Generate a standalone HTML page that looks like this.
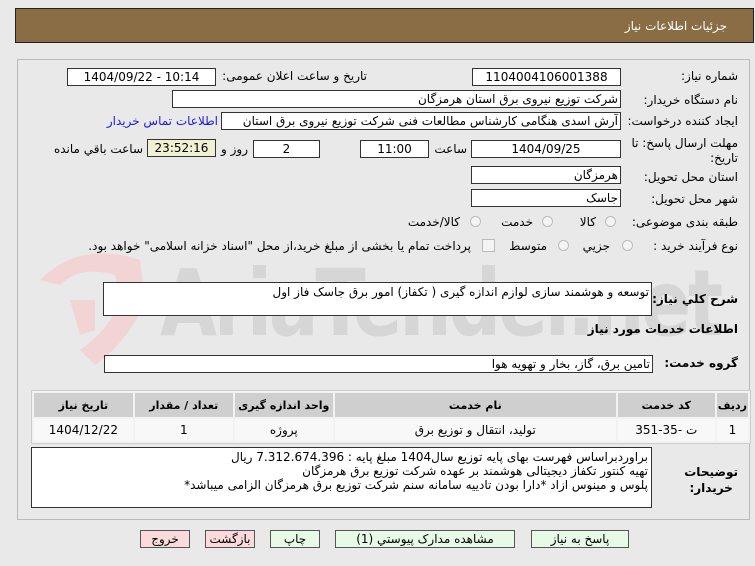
<!DOCTYPE html>
<html><head><meta charset="utf-8"><style>
body{margin:0;width:755px;height:566px;background:#e9e9e9;font-family:"DejaVu Sans","Liberation Sans",sans-serif;font-size:12px;color:#000;position:relative;overflow:hidden}
.a{position:absolute;white-space:nowrap}
.box{position:absolute;background:#fff;border:1px solid #333;box-sizing:border-box;height:18px;line-height:16px;text-align:center;overflow:hidden}
.r{text-align:right;padding-right:2px}
.lbl{position:absolute;white-space:nowrap;direction:rtl}
.rad{position:absolute;width:11px;height:11px;border-radius:50%;border:1px solid #bbb;background:#f4f4f4;box-sizing:border-box}
.btn{position:absolute;top:530px;height:18px;border:1px solid #555;box-sizing:border-box;text-align:center;line-height:16px;font-size:12px;background:#e6fae6}
table{position:absolute;left:31px;top:390px;width:720px;border-collapse:separate;border-spacing:2px;background:#f2f2f2;border:1px solid #ccc;direction:rtl}
th{background:#cfcfcf;height:22px;font-weight:bold;font-size:11px}
td{background:#f8f8f8;height:20px;text-align:center}
</style></head><body>
<div class="a" style="left:15px;top:8px;width:739px;height:35px;background:#8b6d45;border:1px solid #222;box-sizing:border-box"></div>
<div class="lbl" style="right:28px;top:19px;color:#fff;font-size:12px">جزئیات اطلاعات نیاز</div>
<div class="a" style="left:17px;top:59px;width:733px;height:461px;border:1px solid #bbb;box-sizing:border-box"></div>
<svg class="a" style="left:20px;top:240px" width="140" height="135" viewBox="0 0 140 135"><path d="M20 40 Q60 0 120 20 L125 60 Q110 100 75 125 L60 110 Q95 85 100 55 L95 35 Q60 25 40 45 Z" fill="#f2d4d4"/><path d="M50 60 L75 60 L75 90 L60 95 Z" fill="#f2d4d4"/></svg>
<div class="a" style="left:160px;top:250px;font-size:92px;font-weight:bold;color:#d6d6d6;letter-spacing:-4px;transform:scaleX(0.8);transform-origin:left top">AriaTender.net</div>

<div class="lbl" style="right:17px;top:69px">شماره نیاز:</div>
<div class="box" style="left:472px;top:68px;width:149px">1104004106001388</div>
<div class="lbl" style="right:388px;top:69px">تاریخ و ساعت اعلان عمومی:</div>
<div class="box" style="left:67px;top:68px;width:149px">1404/09/22 - 10:14</div>

<div class="lbl" style="right:17px;top:93px">نام دستگاه خریدار:</div>
<div class="box r" style="left:172px;top:90px;width:449px;direction:rtl">شرکت توزیع نیروی برق استان هرمزگان</div>

<div class="lbl" style="right:17px;top:114px">ایجاد کننده درخواست:</div>
<div class="box r" style="left:221px;top:112px;width:400px;direction:rtl">آرش اسدی هنگامی کارشناس مطالعات فنی شرکت توزیع نیروی برق استان هرمزگان</div>
<div class="lbl" style="right:537px;top:114px;color:#1a1ae0">اطلاعات تماس خریدار</div>

<div class="lbl" style="right:17px;top:136px;line-height:15px;text-align:right">مهلت ارسال پاسخ: تا<br>تاریخ:</div>
<div class="box" style="left:471px;top:140px;width:150px">1404/09/25</div>
<div class="lbl" style="right:288px;top:142px">ساعت</div>
<div class="box" style="left:360px;top:140px;width:69px">11:00</div>
<div class="box" style="left:253px;top:140px;width:67px">2</div>
<div class="lbl" style="right:507px;top:142px">روز و</div>
<div class="box" style="left:147px;top:139px;width:69px;background:#f0f0d2">23:52:16</div>
<div class="lbl" style="right:612px;top:142px">ساعت باقي مانده</div>

<div class="lbl" style="right:17px;top:170px">استان محل تحویل:</div>
<div class="box r" style="left:471px;top:166px;width:150px;direction:rtl">هرمزگان</div>
<div class="lbl" style="right:17px;top:192px">شهر محل تحویل:</div>
<div class="box r" style="left:471px;top:189px;width:150px;direction:rtl">جاسک</div>

<div class="lbl" style="right:17px;top:215px">طبقه بندی موضوعی:</div>
<div class="rad" style="left:605px;top:216px"></div><div class="lbl" style="right:159px;top:215px">کالا</div>
<div class="rad" style="left:542px;top:216px"></div><div class="lbl" style="right:222px;top:215px">خدمت</div>
<div class="rad" style="left:470px;top:216px"></div><div class="lbl" style="right:295px;top:215px">کالا/خدمت</div>

<div class="lbl" style="right:17px;top:239px">نوع فرآیند خرید :</div>
<div class="rad" style="left:622px;top:240px"></div><div class="lbl" style="right:145px;top:239px">جزیي</div>
<div class="rad" style="left:558px;top:240px"></div><div class="lbl" style="right:208px;top:239px">متوسط</div>
<div class="a" style="left:482px;top:239px;width:11px;height:11px;border:1px solid #bbb;background:#f4f4f4"></div>
<div class="lbl" style="right:284px;top:239px">پرداخت تمام یا بخشی از مبلغ خرید،از محل "اسناد خزانه اسلامی" خواهد بود.</div>

<div class="lbl" style="right:17px;top:292px;font-weight:bold;font-size:12px">شرح کلي نیاز:</div>
<div class="box r" style="left:103px;top:282px;width:549px;height:34px;text-align:right;direction:rtl;line-height:18px">توسعه و هوشمند سازی لوازم اندازه گیری ( تکفاز) امور برق جاسک فاز اول</div>
<div class="lbl" style="right:17px;top:322px;font-weight:bold;font-size:12px">اطلاعات خدمات مورد نیاز</div>
<div class="lbl" style="right:17px;top:356px;font-weight:bold;font-size:12px">گروه خدمت:</div>
<div class="box r" style="left:104px;top:355px;width:549px;direction:rtl">تامین برق، گاز، بخار و تهویه هوا</div>

<table>
<tr><th style="width:28px">ردیف</th><th style="width:95px">کد خدمت</th><th style="width:279px">نام خدمت</th><th style="width:96px">واحد اندازه گیری</th><th style="width:96px">تعداد / مقدار</th><th>تاریخ نیاز</th></tr>
<tr><td>1</td><td>ت -35-351</td><td>تولید، انتقال و توزیع برق</td><td>پروژه</td><td>1</td><td>1404/12/22</td></tr>
</table>

<div class="lbl" style="right:17px;top:464px;font-weight:bold;font-size:12px;line-height:16px;text-align:center">توضیحات<br>خریدار:</div>
<div class="box" style="left:31px;top:447px;width:621px;height:61px;text-align:right;direction:rtl;padding-right:3px;line-height:14px;padding-top:2px">براوردبراساس فهرست بهای پایه توزیع سال1404 مبلغ پایه : 7.312.674.396 ریال<br>تهیه کنتور تکفاز دیجیتالی هوشمند بر عهده شرکت توزیع برق هرمزگان<br>پلوس و مینوس ازاد *دارا بودن تادییه سامانه سنم شرکت توزیع برق هرمزگان الزامی میباشد*</div>

<div class="btn" style="left:531px;width:98px">پاسخ به نیاز</div>
<div class="btn" style="left:335px;width:180px">مشاهده مدارک پیوستي (1)</div>
<div class="btn" style="left:270px;width:50px">چاپ</div>
<div class="btn" style="left:205px;width:50px;background:#fadadd">بازگشت</div>
<div class="btn" style="left:140px;width:50px;background:#fadadd">خروج</div>
</body></html>
